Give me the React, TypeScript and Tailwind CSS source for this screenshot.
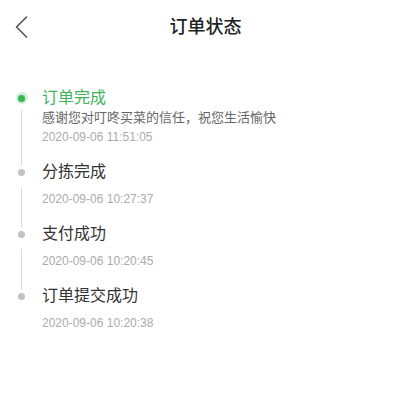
import React from "react";

type Item = { title: string; desc?: string; time: string; active?: boolean };

const items: Item[] = [
  { title: "订单完成", desc: "感谢您对叮咚买菜的信任，祝您生活愉快", time: "2020-09-06 11:51:05", active: true },
  { title: "分拣完成", time: "2020-09-06 10:27:37" },
  { title: "支付成功", time: "2020-09-06 10:20:45" },
  { title: "订单提交成功", time: "2020-09-06 10:20:38" },
];

export default function App() {
  return (
    <div
      className="w-[411px] h-[411px] bg-white overflow-hidden"
      style={{ fontFamily: "'Liberation Sans','Noto Sans CJK SC',sans-serif" }}
    >
      <div className="h-[54px] grid grid-cols-[1fr_auto_1fr] items-center">
        <div className="pl-[15px] flex items-center">
          <svg width="13" height="22" viewBox="0 0 13 22" fill="none">
            <polyline points="11.5,1 1.5,11 11.5,21" stroke="#555" strokeWidth="1.6" strokeLinecap="round" strokeLinejoin="round" />
          </svg>
        </div>
        <div className="text-[18px] leading-[24px] font-medium text-[#222]">订单状态</div>
        <div />
      </div>
      <div className="pt-[33px]">
        {items.map((it, i) => {
          const last = i === items.length - 1;
          return (
            <div key={i} className="flex">
              <div className="w-[42px] pl-[1px] flex flex-col items-center shrink-0">
                <div className="h-[22px] flex items-center justify-center">
                  {it.active ? (
                    <div className="w-[12px] h-[12px] rounded-full bg-[#cfeed8] flex items-center justify-center">
                      <div className="w-[7px] h-[7px] rounded-full bg-[#36b552]" />
                    </div>
                  ) : (
                    <div className="w-[7px] h-[7px] rounded-full bg-[#c2c2c2]" />
                  )}
                </div>
                {!last && (
                  <div
                    className={`w-px flex-1 bg-[#dcdcdc] -mb-[5px] ${it.active ? "mt-[1px]" : "mt-[4px]"}`}
                  />
                )}
              </div>
              <div className="pb-[15px]">
                <div className={`text-[16px] leading-[22px] ${it.active ? "text-[#3fb35a]" : "text-[#333]"}`}>
                  {it.title}
                </div>
                {it.desc && <div className="text-[13px] leading-[18px] text-[#666]">{it.desc}</div>}
                <div className={`text-[12px] leading-[18px] text-[#ababab] ${it.desc ? "mt-[1px]" : "mt-[7px]"}`}>
                  {it.time}
                </div>
              </div>
            </div>
          );
        })}
      </div>
    </div>
  );
}
